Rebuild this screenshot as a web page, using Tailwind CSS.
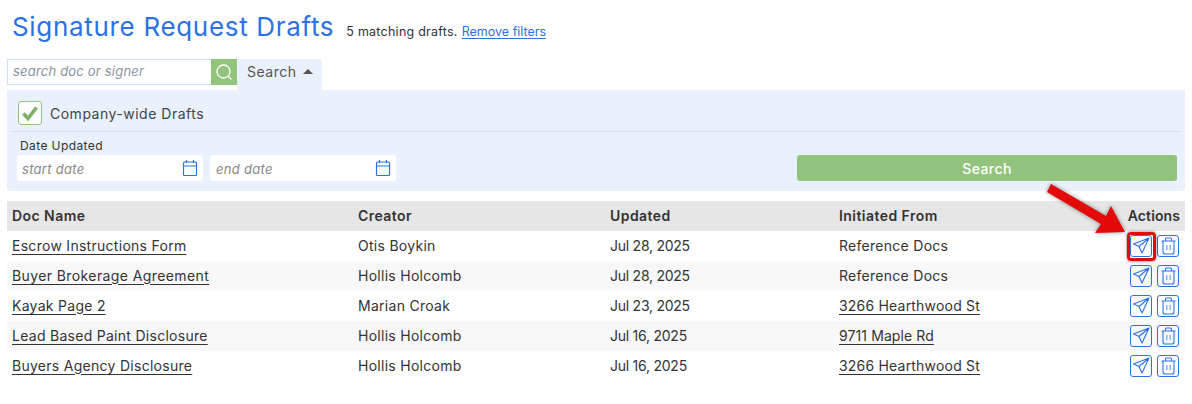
<!DOCTYPE html>
<html lang="en">
<head>
    <meta charset="UTF-8">
    <title>Signature Request Drafts</title>
    <script src="https://cdn.jsdelivr.net/npm/@tailwindcss/browser@4"></script>
</head>
<body class="bg-white font-['Inter',sans-serif] text-[#333] text-[14px] relative h-[404px] overflow-hidden">
    <div class="flex items-baseline pl-3 pt-[10px] h-[59px]">
        <h1 class="text-[26px] leading-[34px] text-[#2b72e6] tracking-[0.68px]">Signature Request Drafts</h1>
        <span class="ml-3 text-[12.5px] tracking-[0.25px]">5 matching drafts.</span>
        <a class="ml-1 text-[12.5px] text-[#2b72e6] underline underline-offset-2">Remove filters</a>
    </div>

    <div class="px-[7px]">
        <div class="flex h-[31px]">
            <div class="w-[204px] h-[26px] border border-[#cfe0f5] border-r-0 bg-white px-[5px] flex items-center">
                <span class="text-[13px] italic text-[#8a94a0] tracking-[0.2px]">search doc or signer</span>
            </div>
            <div class="w-[26px] h-[26px] bg-[#93c47d] flex items-center justify-center">
                <svg width="20" height="20" viewBox="0 0 20 20" fill="none" stroke="#fff" stroke-width="1.3"><circle cx="9.500" cy="9.500" r="6.500"/><path d="M14.500 14.500l3 3"/></svg>
            </div>
            <div class="w-[85px] bg-[#e9f1fc] rounded-t-[3px] flex items-center pl-[10px] gap-[7px] pb-[7px] text-[14px] text-[#555] tracking-[0.5px]">
                Search
                <span class="w-0 h-0 border-x-[5px] border-x-transparent border-b-[5px] border-b-[#555]"></span>
            </div>
        </div>

        <div class="bg-[#e9f1fc] h-[101px] rounded-b-[3px] px-[5px] pt-[11px]">
            <div class="flex items-center gap-2 pl-[6px] h-[24px]">
                <div class="w-[24px] h-[24px] bg-white border border-[#93c47d] rounded-[3px] flex items-center justify-center">
                    <svg width="18" height="18" viewBox="0 0 18 18" fill="none" stroke="#7fb069" stroke-width="3.6"><path d="M2.500 9.500l4.500 5 8.500-11"/></svg>
                </div>
                <span class="text-[14px] text-[#444] tracking-[0.5px]">Company-wide Drafts</span>
            </div>
            <div class="border-t border-[#cfe0f5] mt-[6px] pt-[6px] pl-[8px]">
                <div class="text-[12px] leading-[16px] text-[#333] tracking-[0.4px]">Date Updated</div>
                <div class="flex mt-[1px]">
                    <div class="-ml-[3px] w-[186px] h-[26px] bg-white rounded-[3px] flex items-center justify-between pl-[5px] pr-[5px]">
                        <span class="text-[13px] italic text-[#888] tracking-[0.3px] pt-[3px]">start date</span>
                        <svg width="16" height="18" viewBox="0 0 16 18" fill="none" stroke="#2b72e6" stroke-width="1.2"><rect x="1.500" y="3" width="13" height="13.500" rx="1"/><path d="M1.500 7h13M4.500 1v3M11.500 1v3"/></svg>
                    </div>
                    <div class="ml-[7px] w-[186px] h-[26px] bg-white rounded-[3px] flex items-center justify-between pl-[6px] pr-[5px]">
                        <span class="text-[13px] italic text-[#888] tracking-[0.3px] pt-[3px]">end date</span>
                        <svg width="16" height="18" viewBox="0 0 16 18" fill="none" stroke="#2b72e6" stroke-width="1.2"><rect x="1.500" y="3" width="13" height="13.500" rx="1"/><path d="M1.500 7h13M4.500 1v3M11.500 1v3"/></svg>
                    </div>
                    <button class="ml-auto mr-[3px] w-[380px] h-[26px] bg-[#93c47d] rounded-[3px] text-white text-[14px] font-medium tracking-[0.4px]">Search</button>
                </div>
            </div>
        </div>

        <div class="mt-[10px] tracking-[0.28px]">
            <div class="grid grid-cols-[346px_252px_229px_284px_1fr] h-[30px] items-center bg-[#e6e6e6] font-semibold text-[14px] pl-[5px] tracking-[0.45px] pb-[2px]">
                <div>Doc Name</div><div>Creator</div><div>Updated</div><div>Initiated From</div><div class="text-right pr-[5px] whitespace-nowrap tracking-[0.1px]">Actions</div>
            </div>
            <div class="grid grid-cols-[346px_252px_229px_284px_1fr] h-[30px] items-center pl-[5px]">
                <a class="underline underline-offset-[3px] pb-[2px]">Escrow Instructions Form</a><div class="pb-[2px]">Otis Boykin</div><div class="pb-[2px] tracking-[-0.25px]">Jul 28, 2025</div><div class="pb-[2px]">Reference Docs</div>
                <div class="flex justify-end gap-[5px] pr-[6px] pb-[1px]">
                    <button class="w-[22px] h-[22px] border border-[#2b72e6] rounded-[3px] flex items-center justify-center"><svg width="19" height="19" viewBox="0 0 19 19" fill="none" stroke="#2b72e6" stroke-width="1.1" stroke-linejoin="round"><path d="M17 2L1.500 8 7 10.500 10 17zM17 2L7 10.500"/></svg></button>
                    <button class="w-[22px] h-[22px] border border-[#2b72e6] rounded-[3px] flex items-center justify-center"><svg width="17" height="19" viewBox="0 0 17 19" fill="none" stroke="#2b72e6" stroke-width="1.1"><path d="M1.500 5h14M5.500 5V3a1 1 0 011-1h4a1 1 0 011 1v2M3 5v11a2 2 0 002 2h7a2 2 0 002-2V5"/><path stroke="#8fb4ef" stroke-width="1.500" d="M6.800 9v5M10.200 9v5"/></svg></button>
                </div>
            </div>
            <div class="grid grid-cols-[346px_252px_229px_284px_1fr] h-[30px] items-center bg-[#f8f8f8] pl-[5px]">
                <a class="underline underline-offset-[3px] pb-[2px] tracking-[0.4px]">Buyer Brokerage Agreement</a><div class="pb-[2px]">Hollis Holcomb</div><div class="pb-[2px] tracking-[-0.25px]">Jul 28, 2025</div><div class="pb-[2px]">Reference Docs</div>
                <div class="flex justify-end gap-[5px] pr-[6px] pb-[1px]">
                    <button class="w-[22px] h-[22px] border border-[#2b72e6] rounded-[3px] flex items-center justify-center"><svg width="19" height="19" viewBox="0 0 19 19" fill="none" stroke="#2b72e6" stroke-width="1.1" stroke-linejoin="round"><path d="M17 2L1.500 8 7 10.500 10 17zM17 2L7 10.500"/></svg></button>
                    <button class="w-[22px] h-[22px] border border-[#2b72e6] rounded-[3px] flex items-center justify-center"><svg width="17" height="19" viewBox="0 0 17 19" fill="none" stroke="#2b72e6" stroke-width="1.1"><path d="M1.500 5h14M5.500 5V3a1 1 0 011-1h4a1 1 0 011 1v2M3 5v11a2 2 0 002 2h7a2 2 0 002-2V5"/><path stroke="#8fb4ef" stroke-width="1.500" d="M6.800 9v5M10.200 9v5"/></svg></button>
                </div>
            </div>
            <div class="grid grid-cols-[346px_252px_229px_284px_1fr] h-[30px] items-center pl-[5px]">
                <a class="underline underline-offset-[3px] pb-[2px]">Kayak Page 2</a><div class="pb-[2px]">Marian Croak</div><div class="pb-[2px] tracking-[-0.25px]">Jul 23, 2025</div><a class="underline underline-offset-[3px] pb-[2px] tracking-[0.2px]">3266 Hearthwood St</a>
                <div class="flex justify-end gap-[5px] pr-[6px] pb-[1px]">
                    <button class="w-[22px] h-[22px] border border-[#2b72e6] rounded-[3px] flex items-center justify-center"><svg width="19" height="19" viewBox="0 0 19 19" fill="none" stroke="#2b72e6" stroke-width="1.1" stroke-linejoin="round"><path d="M17 2L1.500 8 7 10.500 10 17zM17 2L7 10.500"/></svg></button>
                    <button class="w-[22px] h-[22px] border border-[#2b72e6] rounded-[3px] flex items-center justify-center"><svg width="17" height="19" viewBox="0 0 17 19" fill="none" stroke="#2b72e6" stroke-width="1.1"><path d="M1.500 5h14M5.500 5V3a1 1 0 011-1h4a1 1 0 011 1v2M3 5v11a2 2 0 002 2h7a2 2 0 002-2V5"/><path stroke="#8fb4ef" stroke-width="1.500" d="M6.800 9v5M10.200 9v5"/></svg></button>
                </div>
            </div>
            <div class="grid grid-cols-[346px_252px_229px_284px_1fr] h-[30px] items-center bg-[#f8f8f8] pl-[5px]">
                <a class="underline underline-offset-[3px] pb-[2px]">Lead Based Paint Disclosure</a><div class="pb-[2px]">Hollis Holcomb</div><div class="pb-[2px] tracking-[-0.25px]">Jul 16, 2025</div><a class="underline underline-offset-[3px] pb-[2px] tracking-[0.1px]">9711 Maple Rd</a>
                <div class="flex justify-end gap-[5px] pr-[6px] pb-[1px]">
                    <button class="w-[22px] h-[22px] border border-[#2b72e6] rounded-[3px] flex items-center justify-center"><svg width="19" height="19" viewBox="0 0 19 19" fill="none" stroke="#2b72e6" stroke-width="1.1" stroke-linejoin="round"><path d="M17 2L1.500 8 7 10.500 10 17zM17 2L7 10.500"/></svg></button>
                    <button class="w-[22px] h-[22px] border border-[#2b72e6] rounded-[3px] flex items-center justify-center"><svg width="17" height="19" viewBox="0 0 17 19" fill="none" stroke="#2b72e6" stroke-width="1.1"><path d="M1.500 5h14M5.500 5V3a1 1 0 011-1h4a1 1 0 011 1v2M3 5v11a2 2 0 002 2h7a2 2 0 002-2V5"/><path stroke="#8fb4ef" stroke-width="1.500" d="M6.800 9v5M10.200 9v5"/></svg></button>
                </div>
            </div>
            <div class="grid grid-cols-[346px_252px_229px_284px_1fr] h-[30px] items-center pl-[5px]">
                <a class="underline underline-offset-[3px] pb-[2px]">Buyers Agency Disclosure</a><div class="pb-[2px]">Hollis Holcomb</div><div class="pb-[2px] tracking-[-0.25px]">Jul 16, 2025</div><a class="underline underline-offset-[3px] pb-[2px] tracking-[0.2px]">3266 Hearthwood St</a>
                <div class="flex justify-end gap-[5px] pr-[6px] pb-[1px]">
                    <button class="w-[22px] h-[22px] border border-[#2b72e6] rounded-[3px] flex items-center justify-center"><svg width="19" height="19" viewBox="0 0 19 19" fill="none" stroke="#2b72e6" stroke-width="1.1" stroke-linejoin="round"><path d="M17 2L1.500 8 7 10.500 10 17zM17 2L7 10.500"/></svg></button>
                    <button class="w-[22px] h-[22px] border border-[#2b72e6] rounded-[3px] flex items-center justify-center"><svg width="17" height="19" viewBox="0 0 17 19" fill="none" stroke="#2b72e6" stroke-width="1.1"><path d="M1.500 5h14M5.500 5V3a1 1 0 011-1h4a1 1 0 011 1v2M3 5v11a2 2 0 002 2h7a2 2 0 002-2V5"/><path stroke="#8fb4ef" stroke-width="1.500" d="M6.800 9v5M10.200 9v5"/></svg></button>
                </div>
            </div>
        </div>
    </div>

    <!-- annotation over the table -->
    <div class="absolute left-[1127px] top-[232px] w-[29px] h-[29px] border-[3px] border-[#e30a0a] rounded-[4px] shadow-[0_0_3px_rgba(0,0,0,0.6)]"></div>
    <svg class="absolute left-[1040px] top-[178px]" width="90" height="62" viewBox="0 0 90 62" style="filter:drop-shadow(0 0 2px rgba(0,0,0,.45))"><path fill="#e30a0a" d="M11 6l55 32 5-10 14 26-30 1 6-9L7 14z"/></svg>
</body>
</html>
